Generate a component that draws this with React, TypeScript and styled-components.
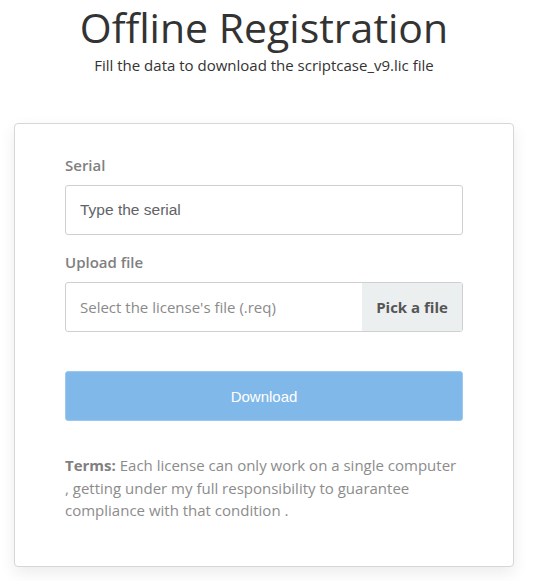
import React from 'react'
import styled, { createGlobalStyle } from 'styled-components'

const GlobalStyle = createGlobalStyle`
  html, body {
    margin: 0;
    padding: 0;
    background: #fff;
  }
  body {
    font-family: "Open Sans", "Liberation Sans", sans-serif;
    color: #333;
  }
`

const Page = styled.div`
  width: 500px;
  padding: 0 0 14px 14px;
`

const Header = styled.div`
  display: flex;
  flex-direction: column;
  align-items: center;
`

const Title = styled.h1`
  margin: 0;
  padding-top: 2px;
  font-size: 41px;
  font-weight: 400;
  line-height: 50px;
  color: #333;
`

const Subtitle = styled.p`
  margin: 3px 0 0;
  font-size: 15px;
  line-height: 20px;
  color: #333;
`

const Card = styled.div`
  margin-top: 48px;
  background: #fff;
  border: 1px solid #d6d6d6;
  border-radius: 4px;
  box-shadow: 0 6px 16px rgba(0, 0, 0, 0.08);
  padding: 31px 50px 44px 50px;
  display: flex;
  flex-direction: column;
`

const Label = styled.label`
  font-size: 15px;
  font-weight: 600;
  color: #808080;
  line-height: 20px;
  margin-bottom: 10px;
`

const Field = styled.div<{ $gap?: number }>`
  display: flex;
  flex-direction: column;
  margin-bottom: ${({ $gap }) => $gap ?? 0}px;
`

const Input = styled.input`
  box-sizing: border-box;
  height: 50px;
  width: 100%;
  padding: 0 14px;
  border: 1px solid #cfcfcf;
  border-radius: 3px;
  font-family: "Liberation Sans", Arial, sans-serif;
  font-size: 15.5px;
  color: #555;
  outline: none;

  &::placeholder {
    color: #5f6368;
  }
`

const FileGroup = styled.div`
  display: flex;
  height: 50px;
  border: 1px solid #cfcfcf;
  border-radius: 3px;
  overflow: hidden;
  box-sizing: border-box;
`

const FileText = styled.div`
  flex: 1;
  display: flex;
  align-items: center;
  padding-left: 14px;
  font-size: 15px;
  color: #8a8a8a;
`

const FileButton = styled.div`
  display: flex;
  align-items: center;
  justify-content: center;
  width: 100px;
  background: #eceff0;
  font-size: 15px;
  font-weight: 700;
  color: #555;
`

const Button = styled.button`
  margin-top: 39px;
  height: 50px;
  border: 1px solid #9dc9ee;
  border-radius: 3px;
  background: #7fb8e9;
  color: #fff;
  font-family: "Liberation Sans", Arial, sans-serif;
  font-size: 15px;
  cursor: pointer;
`

const Terms = styled.p`
  margin: 33px 0 0;
  font-size: 15px;
  line-height: 22.5px;
  color: #8c8c8c;

  b {
    font-weight: 700;
    color: #808080;
  }
`

export default function App() {
  return (
    <>
      <GlobalStyle />
      <Page>
        <Header>
          <Title>Offline Registration</Title>
          <Subtitle>Fill the data to download the scriptcase_v9.lic file</Subtitle>
        </Header>
        <Card>
          <Field $gap={17}>
            <Label>Serial</Label>
            <Input placeholder="Type the serial" />
          </Field>
          <Field>
            <Label>Upload file</Label>
            <FileGroup>
              <FileText>Select the license's file (.req)</FileText>
              <FileButton>Pick a file</FileButton>
            </FileGroup>
          </Field>
          <Button>Download</Button>
          <Terms>
            <b>Terms:</b> Each license can only work on a single computer
            <br />, getting under my full responsibility to guarantee
            <br />compliance with that condition .
          </Terms>
        </Card>
      </Page>
    </>
  )
}
